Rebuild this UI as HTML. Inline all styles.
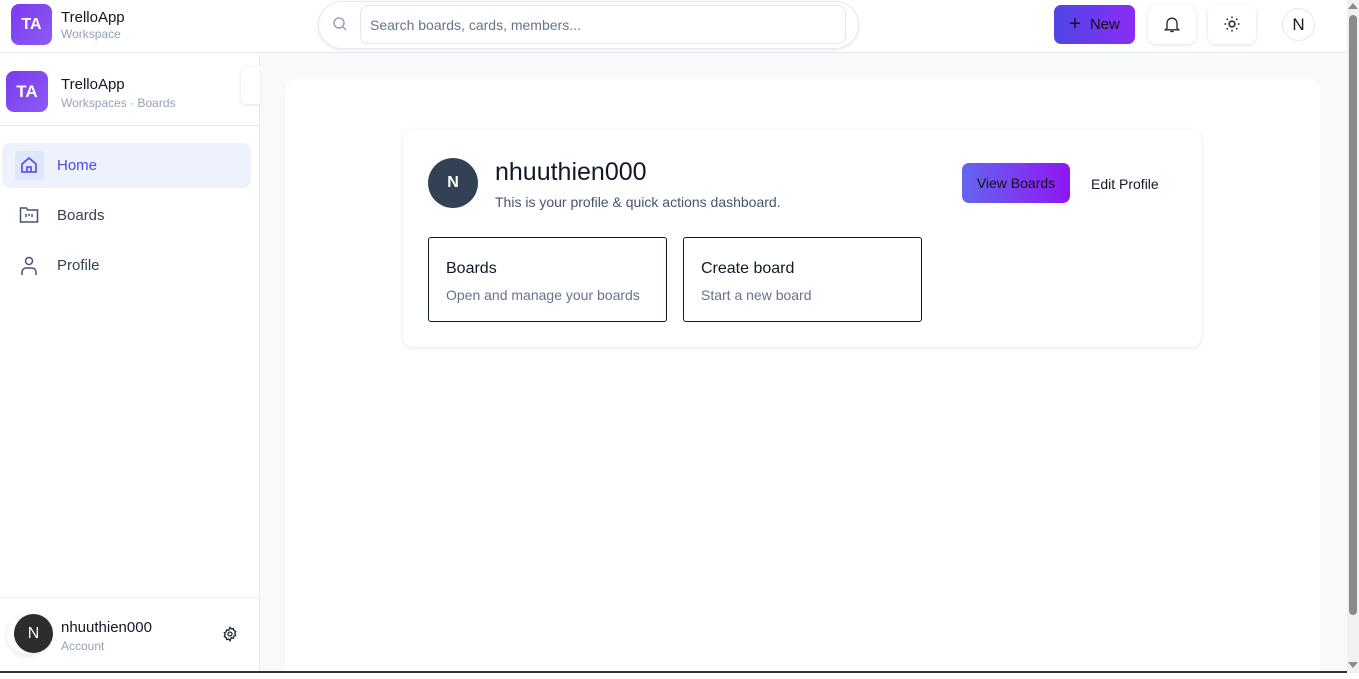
<!DOCTYPE html>
<html><head><meta charset="utf-8"><style>
*{box-sizing:border-box;margin:0;padding:0}
body{width:1359px;height:673px;overflow:hidden;font-family:"Liberation Sans",sans-serif;background:#fff;position:relative;color:#111827}
.abs{position:absolute}
.logo{background:linear-gradient(135deg,#7c3aed,#8b5cf6);color:#fff;font-weight:700;display:flex;align-items:center;justify-content:center;border-radius:8px}
.muted{color:#94a3b8}
</style></head><body>
<!-- header -->
<div class="abs" style="left:0;top:0;width:1347px;height:53px;border-bottom:1px solid #e2e8f0;background:#fff"></div>
<div class="abs logo" style="left:11px;top:4px;width:41px;height:41px;font-size:16px">TA</div>
<div class="abs" style="left:61px;top:9px;font-size:15px">TrelloApp</div>
<div class="abs muted" style="left:61px;top:27px;font-size:12px">Workspace</div>
<div class="abs" style="left:318px;top:1px;width:541px;height:48px;border:1px solid #e2e8f0;border-radius:24px;box-shadow:0 1px 3px rgba(0,0,0,.08)"></div>
<svg class="abs" style="left:332px;top:16px" width="16" height="16" viewBox="0 0 16 16" fill="none" stroke="#94a3b8" stroke-width="1.5"><circle cx="7" cy="7" r="5"/><path d="M11 11l3 3"/></svg>
<div class="abs" style="left:360px;top:5px;width:486px;height:39px;border:1px solid #e2e8f0;border-radius:8px;padding:11px 9px;font-size:14px;color:#64748b">Search boards, cards, members...</div>
<div class="abs" style="left:1054px;top:5px;width:81px;height:39px;border-radius:7px;background:linear-gradient(90deg,#4f46e5,#8b2cf5);display:flex;align-items:center;justify-content:center;font-size:15px;color:#111"><span style="font-size:20px;margin-right:9px;font-weight:300">+</span>New</div>
<div class="abs" style="left:1148px;top:5px;width:48px;height:39px;border-radius:8px;box-shadow:0 1px 4px rgba(0,0,0,.12);background:#fff"></div>
<svg class="abs" style="left:1162px;top:14px" width="20" height="20" viewBox="0 0 24 24" fill="none" stroke="#1f2937" stroke-width="1.6"><path d="M6 17V11a6 6 0 0112 0v6l2 2H4z"/><path d="M10 21h4"/></svg>
<div class="abs" style="left:1208px;top:5px;width:48px;height:39px;border-radius:8px;box-shadow:0 1px 4px rgba(0,0,0,.12);background:#fff"></div>
<svg class="abs" style="left:1222px;top:14px" width="20" height="20" viewBox="0 0 24 24" fill="none" stroke="#1f2937" stroke-width="1.8"><circle cx="12" cy="12" r="3.5"/><path d="M12 3v2M12 19v2M3 12h2M19 12h2M5.6 5.6l1.4 1.4M17 17l1.4 1.4M5.6 18.4L7 17M17 7l1.4-1.4"/></svg>
<div class="abs" style="left:1282px;top:8px;width:33px;height:33px;border-radius:50%;border:1px solid #e2e8f0;display:flex;align-items:center;justify-content:center;font-size:17px">N</div>
<!-- scrollbar -->
<div class="abs" style="left:1347px;top:0;width:12px;height:673px;background:#f1f1f1"></div>
<div class="abs" style="left:1349px;top:15px;width:8px;height:600px;background:#8a8a8a;border-radius:4px"></div>
<div class="abs" style="left:1348px;top:3px;width:0;height:0;border:5px solid transparent;border-bottom:6px solid #8a8a8a;border-top:0"></div>
<div class="abs" style="left:1348px;top:662px;width:0;height:0;border:5px solid transparent;border-top:6px solid #8a8a8a;border-bottom:0"></div>
<!-- sidebar -->
<div class="abs" style="left:0;top:54px;width:260px;height:619px;border-right:1px solid #e2e8f0;background:#fff"></div>
<div class="abs logo" style="left:6px;top:71px;width:42px;height:41px;font-size:17px">TA</div>
<div class="abs" style="left:61px;top:76px;font-size:15px">TrelloApp</div>
<div class="abs muted" style="left:61px;top:96px;font-size:12px">Workspaces · Boards</div>
<div class="abs" style="left:241px;top:67px;width:19px;height:37px;border-radius:6px 0 0 6px;box-shadow:0 1px 4px rgba(0,0,0,.12);background:#fff"></div>
<div class="abs" style="left:0;top:125px;width:259px;border-top:1px solid #e5e7eb"></div>
<div class="abs" style="left:2px;top:143px;width:249px;height:45px;background:#eef2fd;border-radius:8px"></div>
<div class="abs" style="left:15px;top:151px;width:29px;height:29px;background:#e0e7fb;border-radius:4px"></div>
<svg class="abs" style="left:19px;top:155px" width="20" height="20" viewBox="0 0 20 20" fill="none" stroke="#4f46e5" stroke-width="1.6"><path d="M3 9l7-6 7 6v8H3z"/><path d="M8 17v-5h4v5"/></svg>
<div class="abs" style="left:57px;top:157px;font-size:15px;color:#4f46e5">Home</div>
<svg class="abs" style="left:19px;top:206px" width="20" height="18" viewBox="0 0 20 18" fill="none" stroke="#475569" stroke-width="1.5"><path d="M1.5 2h6l1 2h10v12h-17z"/><path d="M7 8v3M10 8v2M13 8v3"/></svg>
<div class="abs" style="left:57px;top:207px;font-size:15px;color:#334155">Boards</div>
<svg class="abs" style="left:20px;top:256px" width="18" height="20" viewBox="0 0 18 20" fill="none" stroke="#475569" stroke-width="1.5"><circle cx="9" cy="5" r="3.5"/><path d="M2 19v-3a4 4 0 014-4h6a4 4 0 014 4v3"/></svg>
<div class="abs" style="left:57px;top:257px;font-size:15px;color:#334155">Profile</div>
<div class="abs" style="left:0;top:597px;width:259px;border-top:1px solid #eef0f4"></div>
<div class="abs" style="left:7px;top:614px;width:40px;height:40px;border-radius:50%;box-shadow:0 2px 6px rgba(0,0,0,.1)"></div>
<div class="abs" style="left:14px;top:614px;width:39px;height:39px;border-radius:50%;background:#2d2d2d;color:#fff;display:flex;align-items:center;justify-content:center;font-size:16px">N</div>
<div class="abs" style="left:61px;top:619px;font-size:15px">nhuuthien000</div>
<div class="abs muted" style="left:61px;top:639px;font-size:12px">Account</div>
<svg class="abs" style="left:222px;top:626px" width="16" height="16" viewBox="0 0 24 24" fill="none" stroke="#1f2937" stroke-width="2"><circle cx="12" cy="12" r="3"/><path d="M12 2l2 2.5 3-.8.8 3 2.7 1.5-1.3 2.8 1.3 2.8-2.7 1.5-.8 3-3-.8L12 22l-2-2.5-3 .8-.8-3-2.7-1.5L4.8 13 3.5 10.2 6.2 8.7l.8-3 3 .8z"/></svg>
<!-- main -->
<div class="abs" style="left:261px;top:54px;width:1086px;height:619px;background:#f8f9fb"></div>
<div class="abs" style="left:285px;top:79px;width:1035px;height:600px;background:#fff;border-radius:12px"></div>
<div class="abs" style="left:403px;top:129px;width:798px;height:218px;background:#fff;border-radius:10px;box-shadow:0 1px 4px rgba(0,0,0,.1)"></div>
<div class="abs" style="left:428px;top:158px;width:50px;height:50px;border-radius:50%;background:#334155;color:#fff;display:flex;align-items:center;justify-content:center;font-size:16px;font-weight:700">N</div>
<div class="abs" style="left:495px;top:158px;font-size:25px">nhuuthien000</div>
<div class="abs" style="left:495px;top:194px;font-size:14px;color:#475569">This is your profile &amp; quick actions dashboard.</div>
<div class="abs" style="left:962px;top:163px;width:108px;height:40px;border-radius:7px;background:linear-gradient(90deg,#6366f1,#9016f2);display:flex;align-items:center;justify-content:center;font-size:14px;color:#111">View Boards</div>
<div class="abs" style="left:1091px;top:176px;font-size:14px">Edit Profile</div>
<div class="abs" style="left:428px;top:237px;width:239px;height:85px;border:1px solid #111827;border-radius:3px;padding:22px 17px">
<div style="font-size:16px">Boards</div><div style="font-size:14px;color:#64748b;margin-top:9px">Open and manage your boards</div></div>
<div class="abs" style="left:683px;top:237px;width:239px;height:85px;border:1px solid #111827;border-radius:3px;padding:22px 17px">
<div style="font-size:16px">Create board</div><div style="font-size:14px;color:#64748b;margin-top:9px">Start a new board</div></div>
<div class="abs" style="left:0;top:671px;width:1347px;height:2px;background:#333"></div>
</body></html>
